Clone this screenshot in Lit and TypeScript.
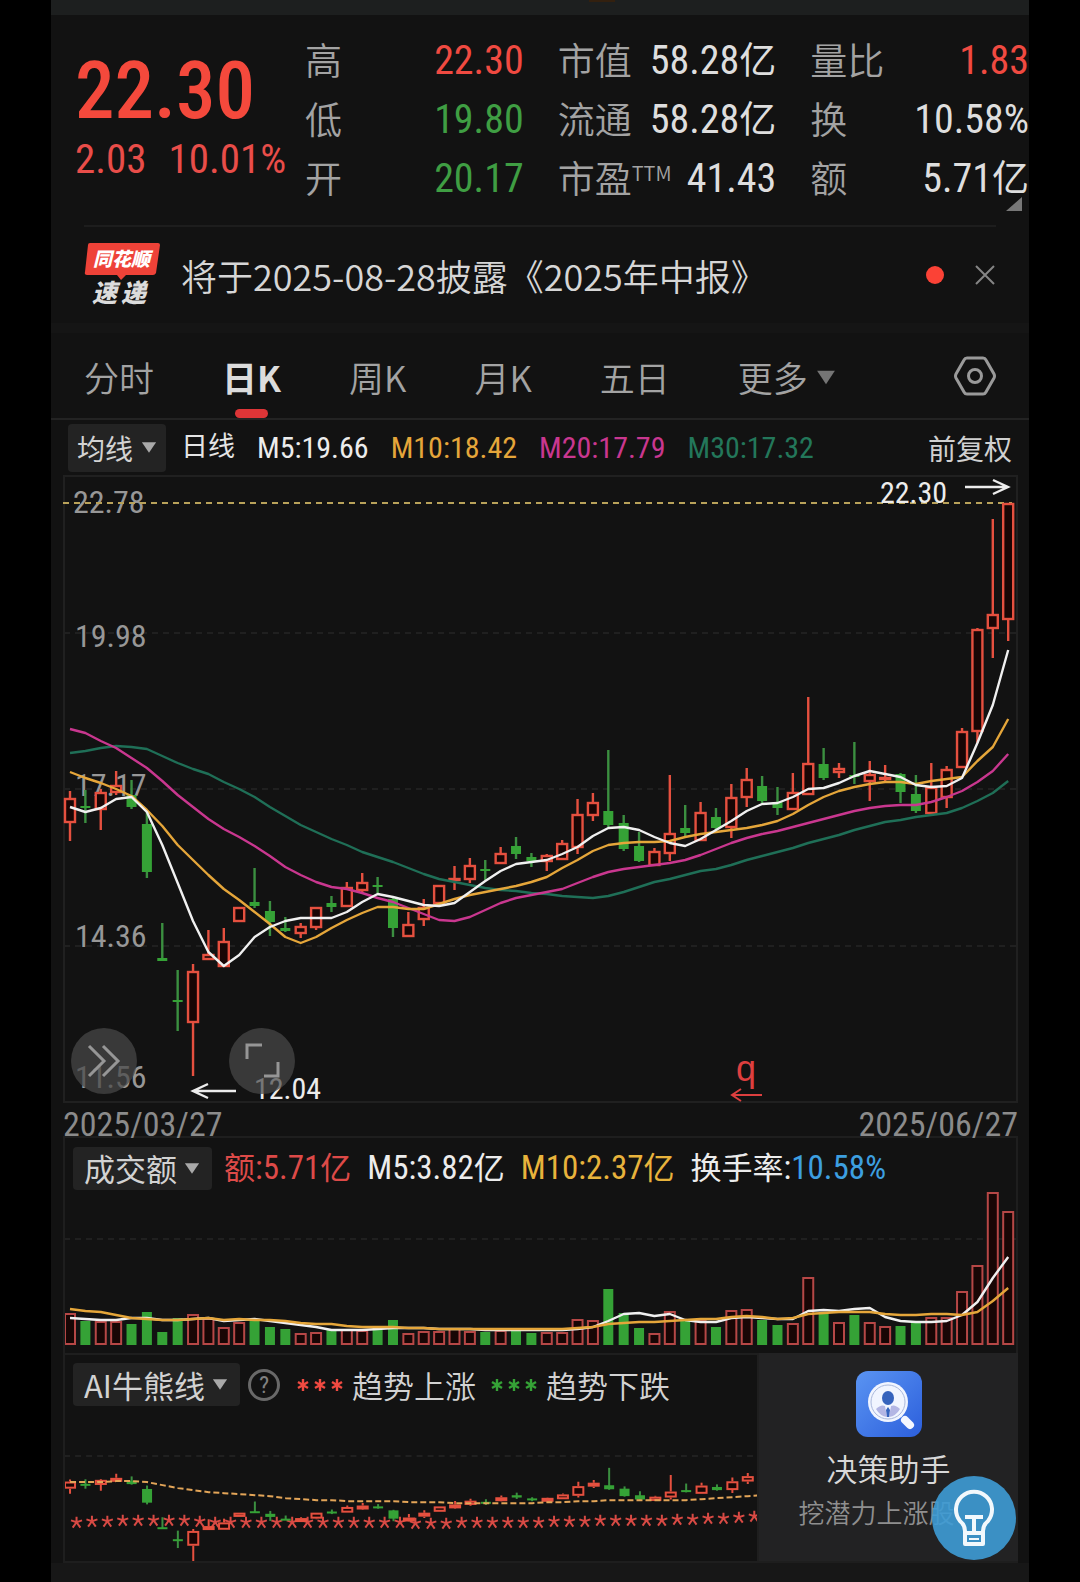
import { LitElement, html, css, svg } from 'lit';
import { customElement, property } from 'lit/decorators.js';

type Kind = 'up' | 'down';
/** kind, high, body top, body bottom, low: all as heights on the chart canvas */
type Candle = [Kind, number, number, number, number];

const STEP = 15.38;
const FIRST = 70;
const cx = (i: number) => FIRST + i * STEP;

const U: Kind = 'up';
const D: Kind = 'down';

const CANDLES: Candle[] = [
  [U, 791, 798, 823, 841], [D, 790, 806, 808, 823], [U, 789, 792, 810, 830], [U, 771, 785, 793, 795],
  [D, 780, 795, 807, 809], [D, 812, 824, 872, 878], [D, 923, 958, 961, 961], [D, 970, 1000, 1002, 1031],
  [U, 964, 971, 1023, 1076], [U, 930, 954, 960, 960], [U, 928, 941, 967, 967], [U, 907, 907, 922, 922],
  [D, 868, 902, 906, 908], [D, 901, 911, 922, 936], [D, 917, 928, 931, 932], [U, 923, 926, 934, 938],
  [U, 907, 907, 928, 930], [D, 896, 903, 907, 912], [U, 882, 887, 907, 907], [U, 873, 882, 891, 893],
  [D, 877, 885, 887, 893], [D, 897, 899, 928, 937], [U, 912, 924, 937, 937], [U, 899, 907, 920, 926],
  [U, 885, 885, 904, 904], [U, 866, 878, 881, 890], [U, 858, 865, 880, 883], [D, 860, 869, 871, 880],
  [U, 847, 853, 864, 864], [D, 837, 846, 854, 859], [D, 853, 857, 861, 867], [U, 854, 855, 862, 871],
  [U, 840, 843, 860, 860], [U, 799, 814, 848, 854], [U, 793, 802, 816, 821], [D, 750, 811, 825, 827],
  [D, 815, 823, 849, 851], [D, 832, 846, 861, 862], [U, 848, 851, 866, 866], [U, 775, 833, 854, 861],
  [D, 805, 828, 833, 836], [U, 802, 812, 841, 841], [D, 808, 817, 828, 830], [U, 784, 797, 828, 838],
  [U, 768, 779, 798, 807], [D, 776, 786, 801, 803], [D, 787, 802, 808, 815], [U, 773, 792, 810, 810],
  [U, 697, 763, 795, 795], [D, 748, 764, 778, 780], [U, 763, 768, 773, 778], [D, 742, 775, 776, 784],
  [U, 761, 774, 782, 801], [U, 765, 777, 780, 783], [D, 773, 774, 792, 803], [D, 775, 794, 811, 813],
  [U, 763, 787, 814, 814], [U, 766, 769, 798, 808], [U, 728, 731, 768, 768], [U, 628, 629, 732, 743],
  [U, 519, 614, 629, 658], [U, 503, 503, 620, 641],
];

const MA5 = [807, 812, 808, 799, 797, 812, 845, 883, 921, 952, 966, 955, 937, 927, 921, 918, 918, 918, 912, 902, 894, 897, 901, 905, 906, 903, 892, 881, 871, 864, 862, 860, 854, 847, 836, 828, 827, 830, 837, 843, 846, 839, 830, 821, 811, 804, 803, 797, 789, 788, 783, 776, 771, 774, 777, 785, 787, 786, 778, 743, 705, 650];
const MA10 = [772, 778, 783, 789, 796, 810, 826, 845, 860, 875, 889, 900, 912, 924, 937, 943, 937, 928, 920, 913, 907, 907, 909, 909, 904, 899, 895, 892, 889, 886, 882, 877, 868, 860, 851, 845, 843, 842, 842, 841, 837, 834, 832, 830, 828, 825, 821, 814, 805, 797, 791, 787, 784, 782, 782, 784, 781, 779, 777, 761, 747, 719];
const MA20 = [729, 733, 741, 748, 758, 768, 781, 795, 807, 819, 829, 837, 846, 856, 867, 875, 882, 887, 889, 893, 898, 902, 908, 914, 920, 921, 917, 910, 903, 898, 895, 892, 889, 883, 877, 872, 869, 867, 865, 863, 860, 855, 849, 843, 838, 834, 831, 827, 823, 819, 815, 811, 808, 806, 805, 805, 802, 797, 791, 782, 771, 754];
const MA30 = [753, 751, 748, 746, 747, 749, 756, 763, 769, 774, 782, 789, 797, 807, 816, 825, 832, 839, 845, 852, 857, 862, 868, 874, 879, 882, 885, 888, 890, 891, 893, 894, 896, 897, 898, 896, 892, 887, 882, 879, 875, 871, 869, 865, 860, 856, 852, 848, 843, 839, 835, 830, 826, 822, 820, 817, 815, 813, 808, 801, 793, 781];

const TURNOVER = [1313, 1321, 1321, 1321, 1324, 1312, 1332, 1318, 1314, 1318, 1327, 1322, 1321, 1327, 1329, 1333, 1332, 1330, 1329, 1330, 1330, 1320, 1333, 1331, 1331, 1328, 1331, 1332, 1330, 1329, 1333, 1332, 1332, 1319, 1320, 1289, 1313, 1328, 1333, 1311, 1321, 1320, 1327, 1310, 1309, 1320, 1325, 1323, 1277, 1313, 1322, 1315, 1322, 1326, 1326, 1322, 1317, 1317, 1291, 1265, 1192, 1211];
const VOL5 = [1318, 1319, 1320, 1320, 1318, 1318, 1320, 1320, 1319, 1318, 1321, 1320, 1319, 1321, 1323, 1325, 1327, 1330, 1330, 1330, 1329, 1328, 1328, 1328, 1329, 1329, 1329, 1330, 1330, 1330, 1330, 1330, 1330, 1329, 1327, 1321, 1314, 1313, 1316, 1314, 1320, 1322, 1322, 1318, 1317, 1318, 1319, 1319, 1311, 1310, 1311, 1309, 1308, 1317, 1321, 1322, 1322, 1321, 1315, 1302, 1278, 1257];
const VOL10 = [1309, 1311, 1312, 1315, 1318, 1319, 1320, 1320, 1319, 1318, 1320, 1319, 1320, 1320, 1321, 1323, 1324, 1324, 1326, 1327, 1327, 1327, 1328, 1328, 1329, 1329, 1329, 1329, 1329, 1329, 1329, 1329, 1329, 1328, 1327, 1324, 1323, 1322, 1322, 1321, 1320, 1319, 1319, 1317, 1316, 1317, 1319, 1318, 1314, 1313, 1312, 1312, 1312, 1314, 1315, 1315, 1314, 1314, 1315, 1312, 1301, 1288];

const TREND = [1483, 1483, 1483, 1482, 1482, 1483, 1486, 1489, 1491, 1493, 1494, 1495, 1496, 1497, 1499, 1500, 1501, 1501, 1502, 1502, 1502, 1502, 1503, 1503, 1503, 1504, 1504, 1504, 1504, 1504, 1504, 1503, 1503, 1502, 1502, 1501, 1501, 1501, 1501, 1501, 1501, 1500, 1499, 1498, 1497, 1496];
const STARS = [1523, 1522, 1522, 1521, 1521, 1521, 1521, 1521, 1522, 1523, 1523, 1523, 1523, 1523, 1523, 1523, 1523, 1523, 1523, 1523, 1523, 1523, 1524, 1524, 1524, 1523, 1523, 1523, 1523, 1523, 1523, 1522, 1522, 1522, 1521, 1521, 1521, 1521, 1521, 1520, 1520, 1519, 1519, 1518, 1517];

const points = (ys: number[]) => ys.map((y, i) => `${cx(i).toFixed(1)},${y}`).join(' ');

const candle = ([kind, high, top, bottom, low]: Candle, i: number) => {
  const x = cx(i);
  if (kind === 'down') {
    return svg`<g class="down"><path d="M${x} ${high}V${low}"/><rect x=${x - 5} y=${top} width="10" height=${Math.max(bottom - top, 2)}/></g>`;
  }
  return svg`<g class="up"><path d="M${x} ${high}V${top}M${x} ${bottom}V${low}"/><rect x=${x - 5} y=${top + 1} width="10" height=${Math.max(bottom - top - 2, 1)}/></g>`;
};

const squash = (y: number) => 1255 + y * 0.285;
const miniCandle = ([kind, h, t, b, l]: Candle, i: number) =>
  candle([kind, squash(h), squash(t), Math.max(squash(b), squash(t) + (kind === 'up' ? 4 : 2)), squash(l)], i);

const arrowDown = html`<svg class="caret" viewBox="0 0 18 14" aria-hidden="true"><path d="M1 1h16L9 13z" /></svg>`;

@customElement('indicator-select')
class IndicatorSelect extends LitElement {
  @property() name = '';
  @property() label = '';
  static styles = css`
    :host { display: block; flex: none; }
    .box { display: flex; align-items: center; gap: 7px; height: 43px; padding: 0 12px 0 11px; border-radius: 4px; background: #232323; }
    :host([tight]) .box { height: 48px; padding: 0 9px; }
    select { appearance: none; border: 0; padding: 0; margin: 0; background: none; color: #d2d2d2; font: 31px/40px 'Noto Sans CJK SC', sans-serif; }
    :host([tight]) select { font-size: 28px; }
    .caret { width: 16px; height: 13px; fill: #a9a9a9; }
  `;
  render() {
    return html`<label class="box"><select aria-label=${this.label}><option>${this.name}</option></select>${arrowDown}</label>`;
  }
}

@customElement('quote-header')
class QuoteHeader extends LitElement {
  static styles = css`
    :host { display: block; }
    .quote { position: relative; display: grid; grid-template-columns: 196px repeat(3, 1fr); column-gap: 34px; padding: 16px 0 17px 24px; font-family: 'Roboto Condensed', Roboto, 'Noto Sans CJK SC', sans-serif; }
    .price { padding-top: 18px; white-space: nowrap; color: #f4493c; }
    .last { font-size: 79px; line-height: 84px; font-weight: 500; }
    .change { display: flex; gap: 22px; font-size: 41px; line-height: 52px; color: #e94d49; }
    dl { margin: 0; }
    .row { display: flex; justify-content: space-between; line-height: 59px; height: 59px; white-space: nowrap; }
    dt { font: 37px/56px 'Noto Sans CJK SC', sans-serif; font-weight: 350; color: #a3a3a3; }
    dd { margin: 0; font-size: 40px; font-weight: 450; color: #dedede; }
    .unit { font-size: 37px; font-weight: 400; }
    .red { color: #f04a41; }
    .green { color: #3f9e43; }
    sup { font-size: 20px; line-height: 20px; vertical-align: 12px; }
    .corner { position: absolute; right: 7px; bottom: 14px; width: 16px; height: 14px; fill: #777; }
  `;
  render() {
    const row = (k: unknown, v: unknown, tone = '') => html`<div class="row"><dt>${k}</dt><dd class=${tone}>${v}</dd></div>`;
    const yi = html`<span class="unit">亿</span>`;
    return html`
      <section class="quote">
        <div class="price">
          <div class="last">22.30</div>
          <div class="change"><span>2.03</span><span>10.01%</span></div>
        </div>
        <dl>${row('高', '22.30', 'red')}${row('低', '19.80', 'green')}${row('开', '20.17', 'green')}</dl>
        <dl>${row('市值', html`58.28${yi}`)}${row('流通', html`58.28${yi}`)}${row(html`市盈<sup>TTM</sup>`, '41.43')}</dl>
        <dl>${row('量比', '1.83', 'red')}${row('换', '10.58%')}${row('额', html`5.71${yi}`)}</dl>
        <svg class="corner" viewBox="0 0 16 14" aria-hidden="true"><path d="M16 0v14H0z" /></svg>
      </section>`;
  }
}

@customElement('news-notice')
class NewsNotice extends LitElement {
  static styles = css`
    :host { display: block; }
    .notice { display: flex; align-items: center; height: 96px; margin: 0 33px; border-top: 2px solid #1d1d1d; }
    .logo { flex: none; width: 76px; height: 66px; margin-right: 21px; overflow: visible; }
    a { flex: 1; color: #d6d6d6; text-decoration: none; font: 36px/50px 'Noto Sans CJK SC', sans-serif; font-weight: 350; white-space: nowrap; }
    .dot { width: 18px; height: 18px; border-radius: 50%; background: #fb4236; margin-right: 31px; }
    button { border: 0; background: none; padding: 0; width: 20px; height: 20px; margin-right: 1px; }
    button svg { display: block; width: 20px; height: 20px; stroke: #858585; stroke-width: 2; fill: none; }
    .brand { font: italic 900 19px 'Noto Sans CJK SC', sans-serif; fill: #fff; }
    .sub { font: italic 900 25px 'Noto Sans CJK SC', sans-serif; fill: #dcdcdc; }
  `;
  render() {
    return html`
      <div class="notice">
        <svg class="logo" viewBox="0 0 76 66" role="img" aria-label="同花顺速递">
          <path d="M6 1h68q2 0 2 2l-4 28q-1 2-3 2H42l-5 5-4-5H3q-3 0-2-3L4 3q0-2 2-2z" fill="#ee4238" />
          <text class="brand" x="9" y="24">同花顺</text>
          <text class="sub" x="8" y="60">速</text>
          <text class="sub" x="37" y="60">递</text>
        </svg>
        <a href="#report">将于2025-08-28披露《2025年中报》</a>
        <span class="dot"></span>
        <button aria-label="关闭"><svg viewBox="0 0 20 20"><path d="M1 1l18 18M19 1L1 19" /></svg></button>
      </div>`;
  }
}

@customElement('period-tabs')
class PeriodTabs extends LitElement {
  static styles = css`
    :host { display: block; }
    nav { display: flex; align-items: stretch; gap: 68px; height: 85px; padding: 0 33px; border-top: 10px solid #151515; border-bottom: 2px solid #232323; }
    button { position: relative; display: flex; align-items: center; gap: 8px; border: 0; margin: 0; padding: 3px 0 0; background: none; color: #a3a3a3; font: 35px/50px 'Noto Sans CJK SC', sans-serif; font-weight: 350; white-space: nowrap; }
    .active { color: #dcdcdc; font-weight: 700; }
    .active::after { content: ''; position: absolute; left: 50%; bottom: 0; width: 33px; height: 9px; margin-left: -17px; border-radius: 5px; background: #dd3537; }
    .caret { width: 20px; height: 17px; fill: #757575; }
    .gear { margin-left: auto; padding-top: 0; }
    .gear svg { width: 42px; height: 40px; fill: none; stroke: #9a9a9a; stroke-width: 3; }
  `;
  render() {
    return html`
      <nav>
        <button>分时</button>
        <button class="active">日K</button>
        <button>周K</button>
        <button>月K</button>
        <button>五日</button>
        <button>更多${arrowDown}</button>
        <button class="gear" aria-label="设置">
          <svg viewBox="0 0 42 40"><path d="M13 2h16q2 0 3 2l8 14q1 2 0 4l-8 14q-1 2-3 2H13q-2 0-3-2L2 22q-1-2 0-4L10 4q1-2 3-2z" /><circle cx="21" cy="20" r="6.5" /></svg>
        </button>
      </nav>`;
  }
}

@customElement('app-root')
class AppRoot extends LitElement {
  static styles = css`
    :host { display: block; background: #000; padding: 0 51px; }
    main { background: #121212; overflow: hidden; font-family: 'Roboto Condensed', Roboto, 'Noto Sans CJK SC', sans-serif; color: #e4e4e4; }
    .status { height: 15px; background: #1d1f1f; }
    .status::before { content: ''; display: block; width: 26px; height: 2px; margin-left: 55%; background: #33200f; }
    .legend { display: flex; align-items: center; font-size: 30px; line-height: 43px; white-space: nowrap; }
    .legend.ma { height: 55px; gap: 22px; padding: 0 17px; }
    .legend.ma indicator-select { margin-right: -7px; }
    .cn { font-size: 27px; }
    .adjust { margin-left: auto; border: 0; padding: 2px 0 0; background: none; color: #d0d0d0; font: 28px/43px 'Noto Sans CJK SC', sans-serif; }
    .amber { color: #e5a63a; }
    .pink { color: #c9378f; }
    .teal { color: #23775a; }
    .red { color: #dd4a48; }
    .gold { color: #e8b33c; }
    .blue { color: #3d9fe0; }
    .white { color: #ececec; }
    .charts { margin: 0 11px 0 12px; }
    .plot { position: relative; }
    svg { display: block; }
    .canvas { width: 100%; height: auto; }
    .frame { fill: none; stroke: #202020; stroke-width: 2; }
    .grid { fill: none; stroke: #202020; stroke-width: 2; stroke-dasharray: 6 5; }
    .last-line { fill: none; stroke: #b9a25a; stroke-width: 2; stroke-dasharray: 6 5; }
    .up { fill: #180605; stroke: #e5503f; stroke-width: 2.4; }
    .down { fill: #35a236; }
    .down path { stroke: #3b8f40; stroke-width: 2.4; }
    .vol .up { stroke: #b64746; stroke-width: 2; }
    .mini .up, .mini .down path { stroke-width: 2; }
    .line { fill: none; stroke-width: 2.4; stroke-linejoin: round; }
    .ma5 { stroke: #f0f0f0; }
    .ma10 { stroke: #e5a63a; }
    .ma20 { stroke: #c9378f; }
    .ma30 { stroke: #1f6f57; }
    .axis { fill: #979797; font-size: 32px; }
    .tip { fill: #ececec; font-size: 30px; }
    .pointer { fill: none; stroke: #ececec; stroke-width: 2.4; }
    .mark { fill: none; stroke: #dd3f3f; stroke-width: 2; }
    .mark-text { fill: #dd3f3f; font: 36px 'Liberation Sans', sans-serif; }
    .round { position: absolute; bottom: 9px; width: 66px; height: 66px; padding: 0; border: 0; border-radius: 50%; background: rgba(72, 72, 72, 0.72); }
    .round svg { width: 66px; height: 66px; fill: none; stroke: #969696; stroke-width: 3; }
    .skip { left: 8px; }
    .full { left: 166px; }
    .dates { display: flex; justify-content: space-between; padding-top: 10px; font-size: 34px; line-height: 23px; color: #8b8b8b; }
    .panel { border: 2px solid #1e1e1e; border-bottom: 0; }
    .panel .legend { padding: 8px 8px 0; gap: 16px; }
    .panel .legend indicator-select { margin-right: -4px; }
    .figures { font-size: 33px; }
    .u { font-size: 31px; }
    .row { display: flex; border-bottom: 2px solid #1e1e1e; }
    .ai { flex: 695; min-width: 0; box-sizing: border-box; }
    .ai .legend { gap: 7px; font-family: 'Noto Sans CJK SC', sans-serif; font-size: 31px; font-weight: 350; color: #d2d2d2; }
    .ai .legend indicator-select { margin-right: 1px; }
    .help { width: 32px; height: 32px; padding: 0; box-sizing: border-box; border: 3px solid #696969; border-radius: 50%; background: none; color: #808080; font: 24px/24px 'Roboto Condensed', sans-serif; }
    .key { width: 48px; height: 16px; margin-left: 10px; fill: none; stroke-width: 2.4; }
    .key.rise { stroke: #f04a41; }
    .key.fall { stroke: #35a236; margin-left: 8px; }
    .trend { fill: none; stroke: #e3a558; stroke-width: 2; stroke-dasharray: 6 3; }
    .stars { fill: none; stroke: #d84a44; stroke-width: 2; }
    .side { position: relative; flex: 260; box-sizing: border-box; display: flex; flex-direction: column; align-items: center; padding-top: 18px; background: #222223; }
    .side a { display: flex; flex-direction: column; align-items: center; color: #d8d8d8; text-decoration: none; font: 31px/46px 'Noto Sans CJK SC', sans-serif; font-weight: 350; white-space: nowrap; }
    .app { width: 66px; height: 66px; margin-bottom: 8px; }
    .sub { margin-right: 24px; color: #8f8f8f; font-size: 26px; line-height: 42px; }
    .bulb { position: absolute; right: 2px; bottom: 1px; width: 84px; height: 84px; padding: 0; border: 0; border-radius: 50%; background: rgba(62, 156, 214, 0.9); }
    .bulb svg { width: 84px; height: 84px; fill: none; stroke: #f2f8fc; stroke-width: 4; stroke-linejoin: round; }
    .foot { height: 20px; background: #171717; }
  `;

  private star(x: number, y: number, r: number) {
    return `M${x} ${y - r}V${y}M${x - r} ${y - r / 3}L${x} ${y}L${x + r} ${y - r / 3}M${x - r * 0.7} ${y + r}L${x} ${y}L${x + r * 0.7} ${y + r}`;
  }

  private key(cls: string) {
    return html`<svg class="key ${cls}" viewBox="0 0 48 16" aria-hidden="true">
      ${[6, 23, 40].map((x) => svg`<path d="M${x} 2v12M${x - 5} 5l10 6M${x + 5} 5l-10 6" />`)}
    </svg>`;
  }

  render() {
    return html`
      <main>
        <div class="status"></div>
        <quote-header></quote-header>
        <news-notice></news-notice>
        <period-tabs></period-tabs>
        <div class="legend ma">
          <indicator-select tight name="均线" label="主图指标"></indicator-select>
          <span class="cn">日线</span>
          <span class="white">M5:19.66</span>
          <span class="amber">M10:18.42</span>
          <span class="pink">M20:17.79</span>
          <span class="teal">M30:17.32</span>
          <button class="adjust">前复权</button>
        </div>
        <div class="charts">
          <div class="plot">
            <svg class="canvas" viewBox="63 475 955 628" role="img" aria-label="日K线图">
              <rect class="frame" x="64" y="476" width="953" height="626" />
              <path class="grid" d="M64 633H1016M64 789H1016M64 946H1016" />
              <g class="axis">
                <text x="73" y="513">22.78</text>
                <text x="75" y="647">19.98</text>
                <text x="75" y="796">17.17</text>
                <text x="75" y="947">14.36</text>
                <text x="75" y="1088">11.56</text>
              </g>
              <path class="last-line" d="M63 503H1012" />
              ${CANDLES.map(candle)}
              <polyline class="line ma30" points=${points(MA30)} />
              <polyline class="line ma20" points=${points(MA20)} />
              <polyline class="line ma10" points=${points(MA10)} />
              <polyline class="line ma5" points=${points(MA5)} />
              <text class="tip" x="880" y="503">22.30</text>
              <path class="pointer" d="M965 487H1008M993 480L1008 487L993 494" />
              <text class="tip" x="254" y="1099">12.04</text>
              <path class="pointer" d="M236 1091H193M208 1084L193 1091L208 1098" />
              <text class="mark-text" x="736" y="1081">q</text>
              <path class="mark" d="M762 1095H732M741 1089L732 1095L741 1101" />
            </svg>
            <button class="round skip" aria-label="展开"><svg viewBox="0 0 66 66"><path d="M18 18l15 15-15 15M32 18l15 15-15 15" /></svg></button>
            <button class="round full" aria-label="全屏"><svg viewBox="0 0 66 66"><path d="M18 31V17h15M49 34v14H35" /></svg></button>
          </div>
          <div class="dates"><span>2025/03/27</span><span>2025/06/27</span></div>
          <section class="panel">
            <div class="legend figures">
              <indicator-select name="成交额" label="副图指标"></indicator-select>
              <span class="red"><span class="u">额</span>:5.71<span class="u">亿</span></span>
              <span class="white">M5:3.82<span class="u">亿</span></span>
              <span class="gold">M10:2.37<span class="u">亿</span></span>
              <span class="white"><span class="u">换手率</span>:<span class="blue">10.58%</span></span>
            </div>
            <svg class="canvas vol" viewBox="65 1190 951 163" role="img" aria-label="成交额柱状图">
              <path class="grid" d="M64 1239H1016" />
              ${TURNOVER.map((y, i) =>
                CANDLES[i][0] === 'down'
                  ? svg`<rect class="down" x=${cx(i) - 5} y=${y} width="10" height=${1345 - y} />`
                  : svg`<rect class="up" x=${cx(i) - 5} y=${y + 1} width="10" height=${1343 - y} />`
              )}
              <polyline class="line ma5" points=${points(VOL5)} />
              <polyline class="line ma10" points=${points(VOL10)} />
            </svg>
          </section>
          <div class="row">
            <section class="panel ai">
              <div class="legend">
                <indicator-select name="AI牛熊线" label="AI指标"></indicator-select>
                <button class="help" aria-label="说明">?</button>
                ${this.key('rise')}<span>趋势上涨</span>
                ${this.key('fall')}<span>趋势下跌</span>
              </div>
              <svg class="canvas mini" viewBox="65 1407 691 155" role="img" aria-label="AI牛熊线">
                <path class="grid" d="M64 1457H760" />
                <path class="stars" d=${STARS.map((y, i) => this.star(cx(i) + 6.5, y, 5.5)).join('')} />
                ${CANDLES.slice(0, 45).map(miniCandle)}
                <polyline class="trend" points=${points(TREND)} />
              </svg>
            </section>
            <aside class="side">
              <a href="#assistant">
                <svg class="app" viewBox="0 0 66 66" aria-hidden="true">
                  <defs>
                    <linearGradient id="g" x1="0" y1="0" x2="1" y2="1"><stop offset="0" stop-color="#5a94f2" /><stop offset="1" stop-color="#2c5fdc" /></linearGradient>
                  </defs>
                  <rect width="66" height="66" rx="12" fill="url(#g)" />
                  <path d="M49 49l5 5" stroke="#f4f7ff" stroke-width="8" stroke-linecap="round" />
                  <circle cx="32" cy="31" r="20" fill="#f1f5ff" />
                  <circle cx="32" cy="31" r="17" fill="none" stroke="#a9b8dc" stroke-width="1" />
                  <path d="M20 38q5-5 9-3l2 11q-7-1-11-8zM44 38q-5-5-9-3l-2 11q7-1 11-8z" fill="#b3b6e4" />
                  <ellipse cx="32" cy="27" rx="6" ry="7" fill="#3563bd" />
                  <path d="M32 36l2 3-1 7h-2l-1-7z" fill="#3563bd" />
                </svg>
                <span>决策助手</span>
                <span class="sub">挖潜力上涨股</span>
              </a>
              <button class="bulb" aria-label="提示">
                <svg viewBox="0 0 84 84"><path d="M33 55q0-6-5-10a18 18 0 1 1 28 0q-5 4-5 10v13H33zM33 57h18M33 41h18M42 41v16" /><path d="M37 63h10" stroke-width="2" /></svg>
              </button>
            </aside>
          </div>
        </div>
        <div class="foot"></div>
      </main>`;
  }
}
